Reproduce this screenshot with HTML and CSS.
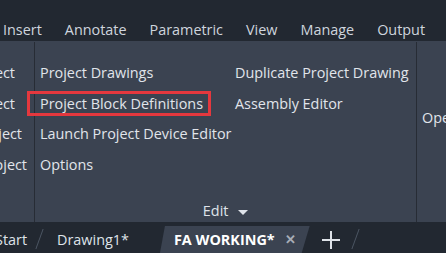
FILE: index.html
```html
<!DOCTYPE html>
<html lang="en">
<head>
    <meta charset="UTF-8">
    <title>Ribbon - Project tab</title>
    <link rel="stylesheet" href="styles.css">
</head>
<body>
    <div class="menubar">
        <span class="menu-item">Insert</span>
        <span class="menu-item">Annotate</span>
        <span class="menu-item">Parametric</span>
        <span class="menu-item">View</span>
        <span class="menu-item">Manage</span>
        <span class="menu-item">Output</span>
    </div>

    <div class="ribbon">
        <div class="panel panel-clipped">
            <div class="clip-row r1">Project</div>
            <div class="clip-row r2">Project</div>
            <div class="clip-row r3">Project</div>
            <div class="clip-row r4">Project</div>
        </div>

        <div class="panel panel-edit">
            <div class="edit-grid">
                <div class="cmd">Project Drawings</div>
                <div class="cmd">Duplicate Project Drawing</div>
                <div class="cmd highlighted">Project Block Definitions</div>
                <div class="cmd">Assembly Editor</div>
                <div class="cmd">Launch Project Device Editor</div>
                <div class="cmd"></div>
                <div class="cmd">Options</div>
            </div>
            <div class="panel-title">Edit <span class="caret"></span></div>
        </div>

        <div class="panel panel-next">
            <div class="cmd">Open</div>
        </div>
    </div>

    <div class="tabbar">
        <span class="doc-tab start">Start</span>
        <span class="sep"></span>
        <span class="doc-tab">Drawing1*</span>
        <span class="doc-tab active">FA WORKING* <span class="close">&#x2715;</span></span>
        <span class="plus">
            <svg width="18" height="18" viewBox="0 0 18 18"><path d="M9 0V18M0 9H18" stroke="#dfe3e9" stroke-width="2"/></svg>
        </span>
        <span class="sep"></span>
    </div>
</body>
</html>
```

FILE: styles.css
```css
body {
    margin: 0;
    width: 446px;
    height: 253px;
    overflow: hidden;
    background-color: #222831;
    font-family: "Open Sans", "Noto Sans", sans-serif;
    font-size: 14.4px;
    color: #e1e5eb;
}

.menubar {
    height: 41px;
    display: flex;
    align-items: center;
    padding-top: 17px;
    box-sizing: border-box;
    padding-left: 3px;
    gap: 23px;
    color: #cfd5de;
}

.ribbon {
    height: 181px;
    display: flex;
    background-color: #3b4351;
}

.panel {
    flex-shrink: 0;
    border-right: 1px solid #272c35;
    margin: 1px 0 0;
}

.panel-clipped {
    width: 34px;
    overflow: hidden;
    padding-top: 16px;
}

.clip-row {
    height: 30.5px;
    line-height: 30px;
    display: flex;
    justify-content: flex-end;
    white-space: nowrap;
}

.r1, .r2 { padding-right: 19px; }
.r3 { padding-right: 12px; }
.r4 { padding-right: 7px; }

.panel-edit {
    width: 382px;
    display: flex;
    flex-direction: column;
    padding-top: 16px;
    box-sizing: border-box;
}

.edit-grid {
    display: grid;
    grid-template-columns: 195px 1fr;
    padding-left: 5px;
}

.cmd {
    height: 30.5px;
    line-height: 30px;
    white-space: nowrap;
    position: relative;
}

.highlighted::after {
    content: "";
    position: absolute;
    left: -13px;
    top: 2px;
    width: 178px;
    height: 19px;
    border: 3px solid #e5383e;
}

.panel-title {
    margin-top: auto;
    margin-bottom: 1px;
    text-align: center;
    line-height: 20px;
    color: #dfe3ea;
}

.caret {
    display: inline-block;
    margin-left: 6px;
    vertical-align: middle;
    border-left: 5px solid transparent;
    border-right: 5px solid transparent;
    border-top: 5px solid #dfe3ea;
}

.panel-next {
    flex: 1 1 0;
    min-width: 0;
    overflow: hidden;
    border-right: none;
    display: flex;
    align-items: center;
    padding-left: 5px;
    padding-bottom: 27px;
    box-sizing: border-box;
}

.tabbar {
    height: 31px;
    display: flex;
    align-items: flex-end;
    color: #dfe3e9;
}

.doc-tab {
    height: 27px;
    line-height: 27px;
    white-space: nowrap;
}

.start {
    margin-left: -5px;
}

.sep {
    width: 1px;
    height: 20px;
    margin: 0 0 4px;
    background-color: #4c5563;
    transform: skewX(-20deg);
}

.tabbar .sep:nth-of-type(2) {
    margin-left: 12px;
    margin-right: 17px;
}

.active {
    margin-left: 31px;
    padding: 0 14px 0 14px;
    background-color: #3b4351;
    clip-path: polygon(5px 0, 100% 0, calc(100% - 8px) 100%, 0 100%);
    font-weight: 700;
    color: #ffffff;
    display: flex;
    align-items: center;
}

.close {
    margin-left: 10px;
    font-size: 13px;
    font-weight: 700;
    color: #a7adb7;
}

.plus {
    margin: 0 15px 0 12px;
    height: 27px;
    display: flex;
    align-items: center;
}

.tabbar .sep:last-child {
    margin-left: 0;
}
```
